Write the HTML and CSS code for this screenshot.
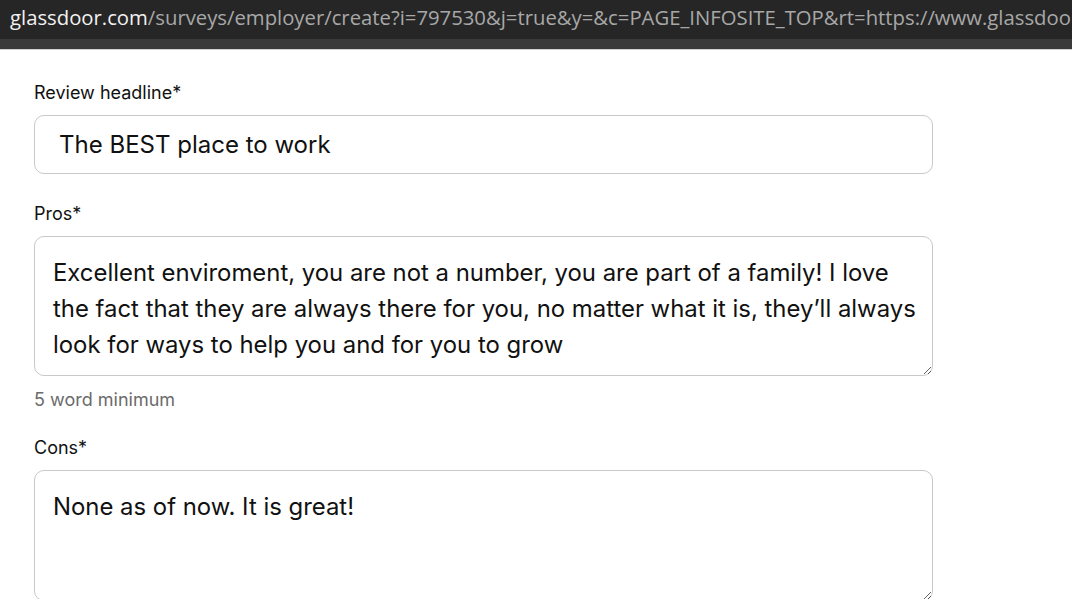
FILE: index.html
```html
<!DOCTYPE html>
<html lang="en">
<head>
<meta charset="utf-8">
<title>Create review</title>
<link rel="stylesheet" href="styles.css">
</head>
<body>
<div class="urlbar"><span class="domain">glassdoor.com</span><span class="path">/surveys/employer/create?i=797530&amp;j=true&amp;y=&amp;c=PAGE_INFOSITE_TOP&amp;rt=https://www.glassdoor.com/Reviews/index.htm</span></div>
<div class="tabstrip"></div>
<main class="form">
  <div class="field">
    <label class="label" for="headline">Review headline*</label>
    <input class="input" id="headline" type="text" value="The BEST place to work">
  </div>
  <div class="field">
    <label class="label" for="pros">Pros*</label>
    <textarea class="area area-pros" id="pros">Excellent enviroment, you are not a number, you are part of a family! I love the fact that they are always there for you, no matter what it is, they’ll always look for ways to help you and for you to grow</textarea>
    <div class="hint">5 word minimum</div>
  </div>
  <div class="field">
    <label class="label" for="cons">Cons*</label>
    <textarea class="area area-cons" id="cons">None as of now. It is great!</textarea>
  </div>
</main>
</body>
</html>
```
FILE: styles.css
```css
* { box-sizing: border-box; }
html, body { margin: 0; padding: 0; background: #fff; overflow: hidden; }
body { width: 1072px; height: 599px; font-family: Inter, "Liberation Sans", sans-serif; color: #111; }

.urlbar {
  height: 39px;
  background: #262626;
  padding-left: 10px;
  font-family: "Open Sans", "Noto Sans", sans-serif;
  font-size: 20.3px;
  line-height: 35px;
  white-space: nowrap;
  overflow: hidden;
}
.domain { color: #f2f2f2; }
.path { color: #a8a8a8; }
.tabstrip {
  height: 11px;
  background: #3a3a3a;
  border-bottom: 1px solid #cfcfcf;
}

.form {
  padding: 33px 0 0 34px;
  width: 933px;
  display: flex;
  flex-direction: column;
  gap: 30px;
}
.field { display: flex; flex-direction: column; }
.label {
  font-size: 18px;
  line-height: 20px;
  color: #111;
  margin-bottom: 12px;
}
.input {
  font-family: inherit;
  height: 59px;
  width: 899px;
  border: 1px solid #c9c9c9;
  border-radius: 10px;
  padding: 0 24px;
  font-size: 24px;
  color: #111;
  outline: none;
}
.area {
  font-family: inherit;
  width: 899px;
  border: 1px solid #c9c9c9;
  border-radius: 10px;
  padding: 18px 8px 18px 18px;
  font-size: 23.9px;
  line-height: 36px;
  color: #111;
  outline: none;
  resize: vertical;
  overflow: hidden;
}
.area-pros { height: 140px; }
.area-cons { height: 131px; }
.hint {
  margin-top: 14px;
  font-size: 18px;
  line-height: 20px;
  color: #6b6b6b;
  margin-bottom: -2px;
}
```
